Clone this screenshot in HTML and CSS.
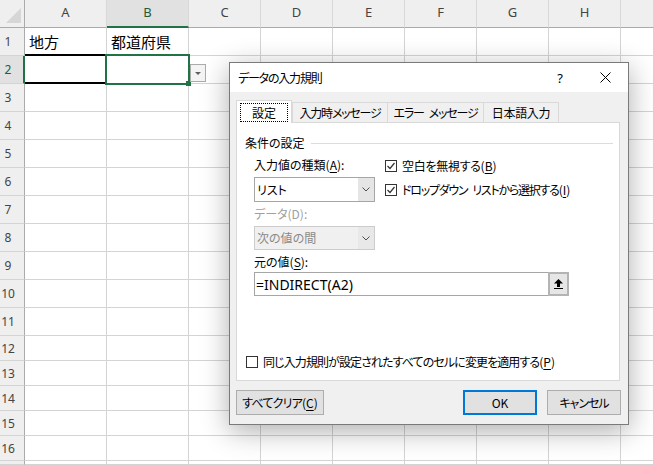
FILE: index.html
```html
<!DOCTYPE html>
<html lang="ja">
<head>
<meta charset="utf-8">
<title>データの入力規則</title>
<link rel="stylesheet" href="styles.css">
</head>
<body>
<div class="sheet">
  <div class="row head">
    <div class="rh corner"><svg width="15" height="15" viewBox="0 0 15 15"><polygon points="15,0 15,15 0,15" fill="#d6d6d6"/></svg></div>
    <div class="ch">A</div><div class="ch sel">B</div><div class="ch">C</div><div class="ch">D</div><div class="ch">E</div><div class="ch">F</div><div class="ch">G</div><div class="ch">H</div><div class="ch"></div>
  </div>
  <div class="row"><div class="rh">1</div><div class="c txt">地方</div><div class="c txt">都道府県</div><div class="c"></div><div class="c"></div><div class="c"></div><div class="c"></div><div class="c"></div><div class="c"></div><div class="c"></div></div>
  <div class="row"><div class="rh sel">2</div><div class="c a2"></div><div class="c b2"><span class="dd"></span></div><div class="c"></div><div class="c"></div><div class="c"></div><div class="c"></div><div class="c"></div><div class="c"></div><div class="c"></div></div>
  <div class="row"><div class="rh">3</div><div class="c"></div><div class="c"></div><div class="c"></div><div class="c"></div><div class="c"></div><div class="c"></div><div class="c"></div><div class="c"></div><div class="c"></div></div>
  <div class="row"><div class="rh">4</div><div class="c"></div><div class="c"></div><div class="c"></div><div class="c"></div><div class="c"></div><div class="c"></div><div class="c"></div><div class="c"></div><div class="c"></div></div>
  <div class="row"><div class="rh">5</div><div class="c"></div><div class="c"></div><div class="c"></div><div class="c"></div><div class="c"></div><div class="c"></div><div class="c"></div><div class="c"></div><div class="c"></div></div>
  <div class="row"><div class="rh">6</div><div class="c"></div><div class="c"></div><div class="c"></div><div class="c"></div><div class="c"></div><div class="c"></div><div class="c"></div><div class="c"></div><div class="c"></div></div>
  <div class="row"><div class="rh">7</div><div class="c"></div><div class="c"></div><div class="c"></div><div class="c"></div><div class="c"></div><div class="c"></div><div class="c"></div><div class="c"></div><div class="c"></div></div>
  <div class="row"><div class="rh">8</div><div class="c"></div><div class="c"></div><div class="c"></div><div class="c"></div><div class="c"></div><div class="c"></div><div class="c"></div><div class="c"></div><div class="c"></div></div>
  <div class="row"><div class="rh">9</div><div class="c"></div><div class="c"></div><div class="c"></div><div class="c"></div><div class="c"></div><div class="c"></div><div class="c"></div><div class="c"></div><div class="c"></div></div>
  <div class="row"><div class="rh">10</div><div class="c"></div><div class="c"></div><div class="c"></div><div class="c"></div><div class="c"></div><div class="c"></div><div class="c"></div><div class="c"></div><div class="c"></div></div>
  <div class="row"><div class="rh">11</div><div class="c"></div><div class="c"></div><div class="c"></div><div class="c"></div><div class="c"></div><div class="c"></div><div class="c"></div><div class="c"></div><div class="c"></div></div>
  <div class="row short"><div class="rh">12</div><div class="c"></div><div class="c"></div><div class="c"></div><div class="c"></div><div class="c"></div><div class="c"></div><div class="c"></div><div class="c"></div><div class="c"></div></div>
  <div class="row short"><div class="rh">13</div><div class="c"></div><div class="c"></div><div class="c"></div><div class="c"></div><div class="c"></div><div class="c"></div><div class="c"></div><div class="c"></div><div class="c"></div></div>
  <div class="row short"><div class="rh">14</div><div class="c"></div><div class="c"></div><div class="c"></div><div class="c"></div><div class="c"></div><div class="c"></div><div class="c"></div><div class="c"></div><div class="c"></div></div>
  <div class="row short"><div class="rh">15</div><div class="c"></div><div class="c"></div><div class="c"></div><div class="c"></div><div class="c"></div><div class="c"></div><div class="c"></div><div class="c"></div><div class="c"></div></div>
  <div class="row short"><div class="rh">16</div><div class="c"></div><div class="c"></div><div class="c"></div><div class="c"></div><div class="c"></div><div class="c"></div><div class="c"></div><div class="c"></div><div class="c"></div></div>
  <div class="row last"><div class="rh"></div><div class="c"></div><div class="c"></div><div class="c"></div><div class="c"></div><div class="c"></div><div class="c"></div><div class="c"></div><div class="c"></div><div class="c"></div></div>
</div>

<div class="dialog">
  <div class="titlebar">
    <span class="title">データの入力規則</span>
    <span class="help">?</span>
    <span class="close"><svg width="11" height="11" viewBox="0 0 11 11"><path d="M0.5 0.5L10.5 10.5M10.5 0.5L0.5 10.5" stroke="#000" stroke-width="1"/></svg></span>
  </div>
  <div class="dbody">
    <div class="tabs">
      <div class="tab active"><span class="focus">設定</span></div>
      <div class="tab t1">入力時メッセージ</div>
      <div class="tab t2"><span>エラー<span class="sp"> </span>メッセージ</span></div>
      <div class="tab t3">日本語入力</div>
    </div>
    <div class="panel">
      <div class="group"><span>条件の設定</span><span class="rule"></span></div>
      <div class="criteria">
        <div class="left">
          <div class="lbl">入力値の種類(<u>A</u>):</div>
          <div class="select"><span class="val">リスト</span><span class="arrow"><svg width="8" height="5" viewBox="0 0 8 5"><polyline points="0.5,0.5 4,4 7.5,0.5" fill="none" stroke="#505050" stroke-width="1"/></svg></span></div>
          <div class="lbl dis">データ(D):</div>
          <div class="select disabled"><span class="val">次の値の間</span><span class="arrow"><svg width="8" height="5" viewBox="0 0 8 5"><polyline points="0.5,0.5 4,4 7.5,0.5" fill="none" stroke="#505050" stroke-width="1"/></svg></span></div>
        </div>
        <div class="right">
          <div class="chk c1"><span class="box"><svg width="10" height="10" viewBox="0 0 10 10"><polyline points="1.5,5 4,7.5 8.5,2" fill="none" stroke="#333" stroke-width="1.2"/></svg></span><span>空白を無視する<span class="m">(<u>B</u>)</span></span></div>
          <div class="chk c2"><span class="box"><svg width="10" height="10" viewBox="0 0 10 10"><polyline points="1.5,5 4,7.5 8.5,2" fill="none" stroke="#333" stroke-width="1.2"/></svg></span><span>ドロップダウン<span class="sp"> </span>リストから選択する<span class="m">(<u>I</u>)</span></span></div>
        </div>
      </div>
      <div class="lbl indent">元の値(<u>S</u>):</div>
      <div class="input"><span class="itext">=INDIRECT(A2)</span><span class="pick"><svg width="9" height="10" viewBox="0 0 9 10" shape-rendering="crispEdges"><polygon points="4.5,0 9,4.5 0,4.5" fill="#000" shape-rendering="geometricPrecision"/><rect x="3" y="4" width="3" height="4" fill="#000"/><rect x="0" y="9" width="9" height="1" fill="#000"/></svg></span></div>
      <div class="chk apply"><span class="box"></span><span>同じ入力規則が設定されたすべてのセルに変更を適用する<span class="m">(<u>P</u>)</span></span></div>
    </div>
    <div class="footer">
      <button class="btn clear">すべてクリア<span class="m">(<u>C</u>)</span></button>
      <span class="grow"></span>
      <button class="btn ok">OK</button>
      <button class="btn cancel">キャンセル</button>
    </div>
  </div>
</div>
</body>
</html>
```

FILE: styles.css
```css
* { box-sizing: border-box; }
html, body { margin: 0; padding: 0; }
body {
  width: 654px;
  height: 465px;
  overflow: hidden;
  position: relative;
  background: #fff;
  font-family: "Noto Sans CJK JP", "Noto Sans", sans-serif;
}

/* ---------- sheet ---------- */
.sheet { display: flex; flex-direction: column; height: 465px; overflow: hidden; }
.row { display: flex; flex: none; height: 28px; }
.row.short { height: 25px; }
.row.last { flex: 1; height: auto; }
.row > div {
  flex: none;
  width: 72px;
  border-right: 1px solid #d4d4d4;
  border-bottom: 1px solid #d4d4d4;
}
.row > div:nth-child(1) { width: 25px; }
.row > div:nth-child(2), .row > div:nth-child(3) { width: 82px; }
.row > div:last-child { flex: 1; }

.rh {
  background: #efefef;
  border-right-color: #ababab !important;
  font: 12px "Noto Sans", sans-serif;
  color: #444;
  display: flex;
  align-items: center;
  justify-content: center;
  padding-right: 8px;
}
.rh.sel { background: #e1e1e1; border-right: 2px solid #217346 !important; color: #1f5c3a; padding-right: 7px; }
.head .rh, .ch { border-bottom-color: #ababab !important; }
.ch {
  background: #efefef;
  border-right-color: #d8d8d8 !important;
  font: 13px "Noto Sans", sans-serif;
  color: #444;
  display: flex;
  align-items: center;
  justify-content: center;
  padding-bottom: 3px;
}
.ch.sel { background: #e1e1e1; border-bottom: 2px solid #217346 !important; color: #1f5c3a; padding-bottom: 2px; }
.corner { display: flex; align-items: flex-end; justify-content: flex-end; padding: 0 3px 4px 0 !important; }

.txt {
  font-size: 15px;
  line-height: 1;
  padding-left: 4px;
  display: flex;
  align-items: center;
  color: #000;
}
.a2 { position: relative; }
.a2::after {
  content: "";
  position: absolute;
  left: 0; right: -1px; top: -2px; bottom: -1px;
  border-top: 2px solid #000;
  border-bottom: 2px solid #000;
}
.b2 { position: relative; }
.b2::after {
  content: "";
  position: absolute;
  left: -2px; top: -2px; right: -2px; bottom: -2px;
  border: 2px solid #217346;
}
.b2::before {
  content: "";
  position: absolute;
  left: 79px; top: 25px;
  width: 5px; height: 5px;
  background: #217346;
  z-index: 2;
}
.dd {
  position: absolute;
  left: 83px; top: 8px;
  width: 16px; height: 18px;
  border: 1px solid #ababab;
  background: #f4f4f4;
  display: flex;
  align-items: center;
  justify-content: center;
  z-index: 2;
}
.dd::after {
  content: "";
  border-left: 3px solid transparent;
  border-right: 3px solid transparent;
  border-top: 3px solid #5f5f5f;
}

/* ---------- dialog ---------- */
.dialog {
  position: absolute;
  left: 229px; top: 62px;
  width: 400px; height: 363px;
  border: 1px solid #7a7a7a;
  background: #f0f0f0;
  box-shadow: 0 6px 26px rgba(0, 0, 0, 0.32);
  display: flex;
  flex-direction: column;
  font: 12px/16px "Noto Sans CJK JP", "Noto Sans", sans-serif;
  font-feature-settings: "palt";
  color: #000;
  z-index: 5;
}
u { text-underline-offset: 2px; text-decoration-thickness: 1px; }
.m { letter-spacing: 0; }
.sp { display: inline-block; width: 5px; white-space: pre; letter-spacing: 0; }
.titlebar { flex: none; height: 29px; background: #fff; display: flex; align-items: center; }
.title { flex: 1; padding-left: 8px; letter-spacing: -1.2px; }
.help { width: 44px; text-align: center; font: 13px "Noto Sans", sans-serif; }
.close { width: 46px; display: flex; justify-content: center; }

.dbody { flex: 1; display: flex; flex-direction: column; padding: 8px 8px 9px 6px; }
.tabs { flex: none; display: flex; align-items: flex-start; height: 23px; margin-bottom: -1px; position: relative; z-index: 1; }
.tab {
  height: 20px;
  margin-top: 2px;
  border: 1px solid #d9d9d9;
  border-bottom: none;
  background: #f0f0f0;
  display: flex;
  align-items: center;
  justify-content: center;
  white-space: nowrap;
}
.tab.active { width: 56px; height: 23px; margin-top: 0; background: #fff; align-items: flex-start; padding: 2px 3px 0; }
.focus { width: 100%; height: 19px; border: 1px dotted #000; display: flex; align-items: center; justify-content: center; }
.t1 { width: 96px; letter-spacing: -1.2px; }
.t2 { width: 97px; margin-left: -1px; letter-spacing: -1.2px; }
.t3 { width: 76px; margin-left: -1px; letter-spacing: -0.3px; }

.panel {
  flex: none;
  height: 259px;
  background: #fff;
  border: 1px solid #d9d9d9;
  display: flex;
  flex-direction: column;
}
.group { display: flex; align-items: center; margin-top: 12px; padding-left: 8px; }
.rule { flex: 1; height: 1px; background: #dcdcdc; margin: 0 6px; }
.criteria { display: flex; margin-top: 6px; padding-left: 17px; }
.left { width: 121px; display: flex; flex-direction: column; }
.lbl { height: 16px; white-space: nowrap; }
.lbl.dis { color: #a0a0a0; margin-top: 4px; }
.lbl.indent { margin-left: 17px; margin-top: 4px; }
.select { display: flex; height: 25px; margin-top: 4px; border: 1px solid #a6a6a6; background: #fff; }
.select.disabled { height: 24px; border-color: #cccccc; background: #f0f0f0; color: #8a8a8a; }
.val { flex: 1; display: flex; align-items: center; padding-left: 2px; }
.arrow { width: 16px; background: #e5e5e5; display: flex; align-items: center; justify-content: center; }
.disabled .arrow { background: #e8e8e8; }
.right { margin-left: 10px; padding-top: 1px; display: flex; flex-direction: column; gap: 8px; }
.chk { display: flex; align-items: center; height: 16px; white-space: nowrap; }
.c1 { letter-spacing: -0.3px; }
.c2 { letter-spacing: -1.25px; }
.box {
  width: 12px; height: 12px;
  border: 1px solid #333;
  background: #fff;
  margin-right: 5px;
  display: flex;
  align-items: center;
  justify-content: center;
  flex: none;
}
.input {
  display: flex;
  width: 315px;
  height: 24px;
  margin: 2px 0 0 17px;
  border: 1px solid #a6a6a6;
  background: #fff;
}
.itext { flex: 1; display: flex; align-items: center; padding-left: 1px; font: 14px "Noto Sans", sans-serif; }
.pick {
  width: 21px;
  margin: -1px -1px -1px 0;
  border: 2px solid #b4b4b4;
  background: #e6e6e6;
  display: flex;
  align-items: center;
  justify-content: center;
}
.apply { margin: auto 0 10px 9px; letter-spacing: -0.9px; }

.footer { flex: none; display: flex; margin-top: 9px; margin-right: -1px; }
.grow { flex: 1; }
.btn {
  height: 25px;
  padding: 0;
  border: 1px solid #adadad;
  background: #e1e1e1;
  font: inherit;
  font-feature-settings: "palt";
  color: #000;
}
.clear { width: 88px; letter-spacing: -0.8px; }
.ok { width: 74px; border: 2px solid #0078d7; margin-right: 10px; }
.cancel { width: 74px; letter-spacing: -1px; }
```
